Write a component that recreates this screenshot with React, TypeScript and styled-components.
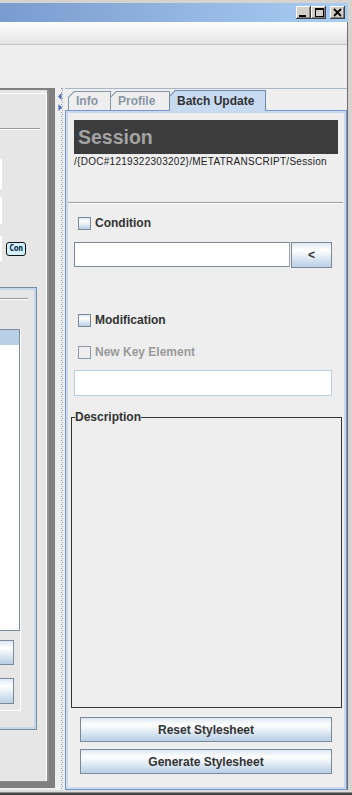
import React from "react";
import styled, { createGlobalStyle } from "styled-components";

const GlobalStyle = createGlobalStyle`
  * { box-sizing: border-box; }
  html, body { margin: 0; padding: 0; background: #d6d3ce; }
  body { font-family: "Liberation Sans", Arial, sans-serif; font-size: 12px; color: #333333; }
`;

const Window = styled.div`
  width: 352px;
  height: 795px;
  display: flex;
  flex-direction: column;
  background: #d6d3ce;
  overflow: hidden;
`;

const TitleBar = styled.div`
  height: 19px;
  margin: 3px 4px 0 0;
  background: linear-gradient(to right, #7a9bcf, #a9cdf3);
  display: flex;
  justify-content: flex-end;
  align-items: flex-start;
  padding: 3px 3px 0 0;
`;

const TitleButton = styled.div<{ $gap?: number }>`
  width: 15px;
  height: 13px;
  margin-left: ${(p) => p.$gap ?? 0}px;
  background: #d4d0c8;
  box-shadow: inset -1px -1px #404040, inset 1px 1px #ffffff, inset -2px -2px #808080;
  display: flex;
  svg { display: block; }
`;

const Client = styled.div`
  flex: 1;
  margin-right: 4px;
  border-right: 1px solid #6e6e6e;
  display: flex;
  flex-direction: column;
  background: #eeeeee;
  min-height: 0;
`;

const Toolbar = styled.div`
  height: 23px;
  background: linear-gradient(to bottom, #fdfdfd, #e4e4e4);
  border-bottom: 1px solid #c2c2c2;
`;

const TopGap = styled.div`
  height: 43px;
`;

const MainRow = styled.div`
  flex: 1;
  display: flex;
  min-height: 0;
`;

const BottomFrame = styled.div`
  height: 5px;
  background: linear-gradient(to bottom, #dcdcdc 0 2px, #8c8c8c 2px 3px, #454545 3px);
`;

/* ---------- left panel ---------- */
const LeftOuter = styled.div`
  width: 55px;
  margin-bottom: 2px;
  background: #808080;
  padding: 2px 6px 6px 0;
  display: flex;
`;

const LeftInner = styled.div`
  flex: 1;
  background: #e6e6e6;
  border-right: 2px solid #8f8f8f;
  border-bottom: 1px solid #8a8a8a;
  padding-top: 3px;
  display: flex;
  flex-direction: column;
`;

const LeftBody = styled.div`
  flex: 1;
  border-top: 1px solid #ffffff;
  border-right: 1px solid #ffffff;
  display: flex;
  flex-direction: column;
`;

const EtchedLine = styled.div<{ $w: number; $top: number }>`
  width: ${(p) => p.$w}px;
  margin-top: ${(p) => p.$top}px;
  height: 2px;
  border-top: 1px solid #9a9a9a;
  border-bottom: 1px solid #ffffff;
`;

const FieldStub = styled.div<{ $h: number; $top?: number }>`
  width: 2px;
  height: ${(p) => p.$h}px;
  margin-top: ${(p) => p.$top ?? 0}px;
  background: #ffffff;
`;

const StubRow = styled.div`
  margin-top: 12px;
  height: 25px;
  display: flex;
  align-items: center;
  gap: 4px;
`;

const Badge = styled.span`
  width: 20px;
  height: 14px;
  border: 1px solid #111111;
  border-radius: 3px;
  background: #d3f1fc;
  color: #001a40;
  font: bold 8px "DejaVu Sans Mono", "Liberation Mono", monospace;
  display: flex;
  align-items: center;
  justify-content: center;
  letter-spacing: -0.3px;
`;

const SubPanel = styled.div`
  width: 37px;
  margin-top: 26px;
  margin-bottom: 51px;
  flex: 1;
  border: 1px solid #7a8a99;
  border-left: none;
  display: flex;
`;

const SubPanelInner = styled.div`
  flex: 1;
  border: 2px solid #c4d6ec;
  border-left: none;
  display: flex;
  flex-direction: column;
`;

const ListGroup = styled.div`
  width: 21px;
  margin-top: 29px;
  border-right: 1px solid #ffffff;
  border-bottom: 1px solid #ffffff;
  padding-bottom: 6px;
  display: flex;
  flex-direction: column;
`;

const ListBox = styled.div`
  width: 20px;
  height: 302px;
  border-top: 1px solid #7a8a99;
  border-right: 1px solid #7a8a99;
  border-bottom: 1px solid #7a8a99;
  background: #ffffff;
  display: flex;
  flex-direction: column;
`;

const ListHeader = styled.div`
  height: 15px;
  background: #b8cfe5;
`;

const StubButton = styled.div<{ $top: number; $h: number }>`
  width: 14px;
  height: ${(p) => p.$h}px;
  margin-top: ${(p) => p.$top}px;
  border: 1px solid #7a8a99;
  border-left: none;
  background: linear-gradient(to bottom, #dde8f3 0%, #ffffff 30%, #b8cfe5 100%);
`;

/* ---------- splitter ---------- */
const Splitter = styled.div`
  width: 10px;
  padding-left: 3px;
  display: flex;
`;

const ArrowCol = styled.div`
  width: 3px;
  padding-top: 5px;
  display: flex;
  flex-direction: column;
  gap: 4px;
  svg { display: block; }
`;

const DotCol = styled.div<{ $offset: number }>`
  width: 1px;
  background-image: repeating-linear-gradient(to bottom, #8397bb 0 1px, transparent 1px 4px);
  background-position: 0 ${(p) => p.$offset}px;
`;

/* ---------- right panel ---------- */
const RightPanel = styled.div`
  flex: 1;
  border-top: 1px solid #a8b6c8;
  padding-top: 1px;
  display: flex;
  flex-direction: column;
  min-width: 0;
`;

const TabRow = styled.div`
  height: 20px;
  padding-left: 3px;
  display: flex;
  align-items: flex-end;
  position: relative;
  z-index: 1;
`;

const Tab = styled.div<{ $w: number; $active?: boolean; $first?: boolean }>`
  width: ${(p) => p.$w}px;
  height: ${(p) => (p.$active ? 21 : 19)}px;
  margin-bottom: ${(p) => (p.$active ? -1 : 0)}px;
  margin-left: ${(p) => (p.$first ? 0 : -1)}px;
  background: ${(p) => (p.$active ? "#7088ad" : "#8796a6")};
  clip-path: polygon(0 6px, 6px 0, 100% 0, 100% 100%, 0 100%);
  padding: 1px 1px 0 1px;
  display: flex;
`;

const TabFace = styled.div<{ $active?: boolean }>`
  flex: 1;
  background: ${(p) => (p.$active ? "#c8daf0" : "#eeeeee")};
  clip-path: polygon(0 5.6px, 5.6px 0, 100% 0, 100% 100%, 0 100%);
  display: flex;
  align-items: center;
  padding-left: 7px;
  font-weight: bold;
  font-size: 12px;
  color: ${(p) => (p.$active ? "#333333" : "#8896a5")};
  white-space: nowrap;
`;

const TabContent = styled.div`
  flex: 1;
  border: 1px solid #7896cc;
  box-shadow: inset 0 0 0 2px #c8daf0;
  padding: 2px;
  background: #eeeeee;
  display: flex;
  flex-direction: column;
  min-height: 0;
`;

const Body = styled.div`
  flex: 1;
  display: flex;
  flex-direction: column;
  padding-bottom: 13px;
  min-height: 0;
`;

const SessionBox = styled.div`
  margin: 7px 6px 0;
  height: 34px;
  background: #3c3c3c;
  color: #a3a3a3;
  font-weight: bold;
  font-size: 19.5px;
  padding-left: 4px;
  display: flex;
  align-items: center;
`;

const PathText = styled.div`
  margin: 2px 6px 0;
  height: 12px;
  line-height: 12px;
  font-size: 10px;
  letter-spacing: 0.28px;
  color: #222222;
  white-space: nowrap;
`;

const Divider = styled.div`
  margin-top: 34px;
  height: 2px;
  border-top: 1px solid #9d9d9d;
  border-bottom: 1px solid #ffffff;
  margin-right: 1px;
`;

const CheckRow = styled.label<{ $top: number; $disabled?: boolean }>`
  margin-top: ${(p) => p.$top}px;
  height: 13px;
  padding-left: 10px;
  display: flex;
  align-items: center;
  gap: 4px;
  font-weight: bold;
  font-size: 12px;
  line-height: 13px;
  color: ${(p) => (p.$disabled ? "#9a9a9a" : "#333333")};
`;

const CheckBox = styled.span<{ $disabled?: boolean }>`
  width: 13px;
  height: 13px;
  flex: none;
  border: 1px solid ${(p) => (p.$disabled ? "#8d9aa8" : "#7a8a99")};
  background: ${(p) =>
    p.$disabled
      ? "#eeeeee"
      : "linear-gradient(to bottom, #dde8f3 0%, #ffffff 30%, #b8cfe5 100%)"};
`;

const FieldRow = styled.div<{ $top: number }>`
  margin: ${(p) => p.$top}px 12px 0 6px;
  height: 26px;
  display: flex;
  align-items: flex-start;
  gap: 1px;
`;

const TextField = styled.div<{ $disabled?: boolean }>`
  flex: 1;
  height: ${(p) => (p.$disabled ? 26 : 25)}px;
  background: #ffffff;
  border: 1px solid ${(p) => (p.$disabled ? "#b8cfe5" : "#7a8a99")};
  border-right-color: ${(p) => (p.$disabled ? "#b8cfe5" : "#9aa7b3")};
`;

const Button = styled.button<{ $w?: number }>`
  ${(p) => (p.$w ? `width: ${p.$w}px;` : "")}
  height: 26px;
  padding: 0;
  border: 1px solid #7a8a99;
  background: linear-gradient(to bottom, #dde8f3 0%, #ffffff 30%, #b8cfe5 100%);
  font-family: "Liberation Sans", Arial, sans-serif;
  font-weight: bold;
  font-size: 12px;
  color: #333333;
  display: flex;
  align-items: center;
  justify-content: center;
`;

const WideButton = styled(Button)<{ $top: number }>`
  height: 25px;
  margin: ${(p) => p.$top}px 12px 0;
`;

const Fieldset = styled.fieldset`
  flex: 1;
  margin: 14px 2px 0 3px;
  padding: 0;
  border: 1px solid #333333;
  min-height: 0;
`;

const Legend = styled.legend`
  margin-left: 3px;
  padding: 0;
  font-weight: bold;
  font-size: 12px;
  line-height: 14px;
  color: #333333;
`;

export default function App() {
  return (
    <>
      <GlobalStyle />
      <Window>
        <TitleBar>
          <TitleButton>
            <svg width="15" height="13" viewBox="0 0 15 13">
              <rect x="3" y="9" width="7" height="2" fill="#000" />
            </svg>
          </TitleButton>
          <TitleButton>
            <svg width="15" height="13" viewBox="0 0 15 13">
              <rect x="4.5" y="2.5" width="8" height="8" fill="none" stroke="#000" strokeWidth="1" />
              <rect x="4" y="2" width="9" height="2" fill="#000" />
            </svg>
          </TitleButton>
          <TitleButton $gap={4}>
            <svg width="15" height="13" viewBox="0 0 15 13">
              <path d="M4 3 L11 10 M11 3 L4 10" stroke="#000" strokeWidth="1.8" />
            </svg>
          </TitleButton>
        </TitleBar>
        <Client>
          <Toolbar />
          <TopGap />
          <MainRow>
            <LeftOuter>
              <LeftInner>
                <LeftBody>
                  <EtchedLine $w={40} $top={34} />
                  <FieldStub $h={30} $top={29} />
                  <FieldStub $h={27} $top={8} />
                  <StubRow>
                    <FieldStub $h={25} />
                    <Badge>Con</Badge>
                  </StubRow>
                  <SubPanel>
                    <SubPanelInner>
                      <EtchedLine $w={28} $top={8} />
                      <ListGroup>
                        <ListBox>
                          <ListHeader />
                        </ListBox>
                        <StubButton $top={9} $h={25} />
                        <StubButton $top={13} $h={26} />
                      </ListGroup>
                    </SubPanelInner>
                  </SubPanel>
                </LeftBody>
              </LeftInner>
            </LeftOuter>
            <Splitter>
              <ArrowCol>
                <svg width="4" height="7" viewBox="0 0 4 7">
                  <path d="M3.5 0 L0 3.5 L3.5 7 Z" fill="#4a6cb3" />
                </svg>
                <svg width="4" height="7" viewBox="0 0 4 7">
                  <path d="M0.5 0 L4 3.5 L0.5 7 Z" fill="#4a6cb3" />
                </svg>
              </ArrowCol>
              <DotCol $offset={0} />
              <DotCol $offset={2} />
            </Splitter>
            <RightPanel>
              <TabRow>
                <Tab $w={43} $first>
                  <TabFace>Info</TabFace>
                </Tab>
                <Tab $w={60}>
                  <TabFace>Profile</TabFace>
                </Tab>
                <Tab $w={97} $active>
                  <TabFace $active>Batch Update</TabFace>
                </Tab>
              </TabRow>
              <TabContent>
                <Body>
                  <SessionBox>Session</SessionBox>
                  <PathText>/{"{"}DOC#1219322303202{"}"}/METATRANSCRIPT/Session</PathText>
                  <Divider />
                  <CheckRow $top={13}>
                    <CheckBox />
                    Condition
                  </CheckRow>
                  <FieldRow $top={12}>
                    <TextField />
                    <Button $w={41}>&lt;</Button>
                  </FieldRow>
                  <CheckRow $top={46}>
                    <CheckBox />
                    Modification
                  </CheckRow>
                  <CheckRow $top={19} $disabled>
                    <CheckBox $disabled />
                    New Key Element
                  </CheckRow>
                  <FieldRow $top={11}>
                    <TextField $disabled />
                  </FieldRow>
                  <Fieldset>
                    <Legend>Description</Legend>
                  </Fieldset>
                  <WideButton $top={9}>Reset Stylesheet</WideButton>
                  <WideButton $top={7}>Generate Stylesheet</WideButton>
                </Body>
              </TabContent>
            </RightPanel>
          </MainRow>
        </Client>
        <BottomFrame />
      </Window>
    </>
  );
}
